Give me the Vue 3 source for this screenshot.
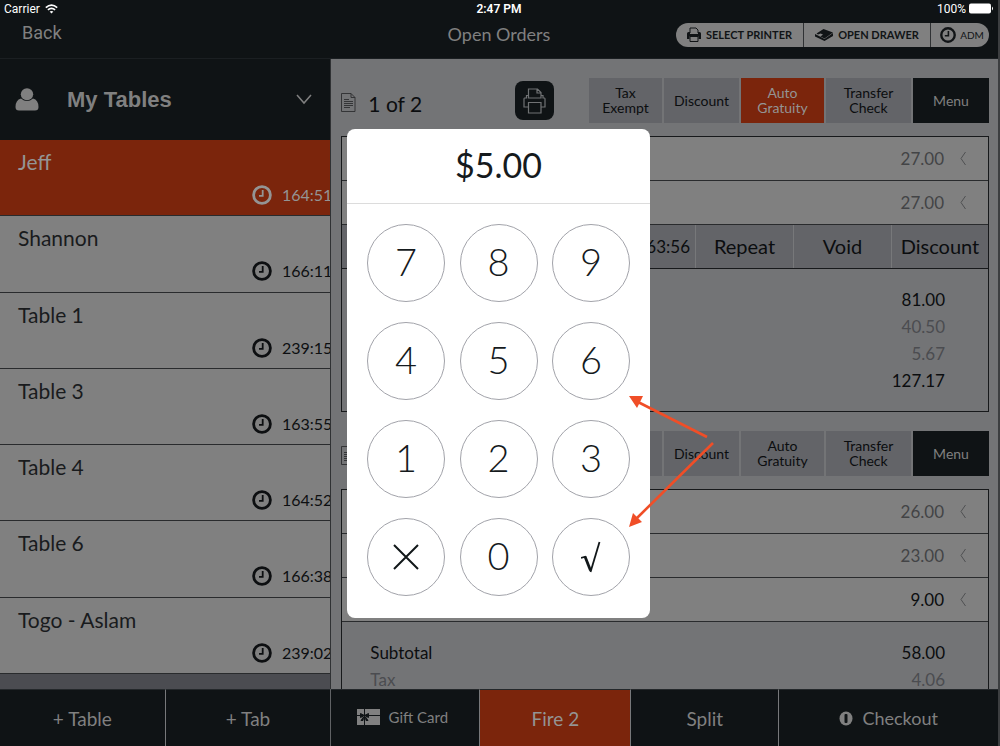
<script setup>
const tables = [
  { name: 'Jeff', time: '164:51', active: true },
  { name: 'Shannon', time: '166:11' },
  { name: 'Table 1', time: '239:15' },
  { name: 'Table 3', time: '163:55' },
  { name: 'Table 4', time: '164:52' },
  { name: 'Table 6', time: '166:38' },
  { name: 'Togo - Aslam', time: '239:02' },
]
const orders = [
  {
    label: '1 of 2',
    auto: true,
    items: [{ price: '27.00', sent: true }, { price: '27.00', sent: true }],
    open: '163:56',
    totals: [
      { value: '81.00' },
      { value: '40.50', dim: true },
      { value: '5.67', dim: true },
      { value: '127.17' },
    ],
  },
  {
    auto: false,
    items: [{ price: '26.00', sent: true }, { price: '23.00', sent: true }, { price: '9.00' }],
    totals: [
      { label: 'Subtotal', value: '58.00' },
      { label: 'Tax', value: '4.06', dim: true },
    ],
  },
]
const keys = ['7', '8', '9', '4', '5', '6', '1', '2', '3', 'x', '0', 'ok']
</script>

<template>
  <div class="app">
    <header class="top">
      <div class="status">
        <span class="carrier">Carrier
          <svg width="13" height="10" viewBox="0 0 13 10" fill="none" stroke="#fff" stroke-width="1.7"><path d="M.8 3.6Q6.5-1.4 12.2 3.6M2.9 5.9Q6.5 2.8 10.1 5.9" /><path d="M6.5 9.5 4.6 7.6Q6.5 6.2 8.4 7.6Z" fill="#fff" stroke="none" /></svg>
        </span>
        <b>2:47 PM</b>
        <span class="battery">100%
          <svg width="25" height="11" viewBox="0 0 25 11" fill="#fff"><rect x="0" y="0.5" width="22" height="10" rx="2" /><path d="M23 3.5q2 2 0 4z" /></svg>
        </span>
      </div>
      <div class="nav">
        <a class="back" href="#">Back</a>
        <h1>Open Orders</h1>
        <div class="pills">
          <button class="printer">
            <svg width="14" height="15" viewBox="0 0 14 15"><path d="M3 6V1h6l2 2v3" fill="none" stroke="#111416" stroke-width="1" /><path d="M1.500 5H3v2h8V5h1.500Q14 5 14 6.500V12h-2.500V9.500H2.500V12H0V6.500Q0 5 1.500 5Z" fill="#111416" /><path d="M3 9.500h8v5H3z" fill="none" stroke="#111416" /></svg>
            SELECT PRINTER
          </button>
          <button class="drawer">
            <svg width="18" height="12" viewBox="0 0 18 12" fill="#111416"><path d="M8.500 0 18 3.500 9.500 9.500 5.500 7.500 8 5.500 5.500 4.500 3 5.500 1.500 4.500Z" /><path d="M0 5 5 7.500 9.500 10 18 4V7L9.500 12 0 7.500Z" /></svg>
            OPEN DRAWER
          </button>
          <button class="adm">
            <svg width="16" height="16" viewBox="0 0 20 20" fill="none" stroke="#111416"><circle cx="10" cy="10" r="8.400" stroke-width="3" /><path d="M10.500 5v6H6" stroke-width="2" /></svg>
            ADM
          </button>
        </div>
      </div>
    </header>

    <main>
      <aside>
        <button class="mine">
          <svg width="24" height="23" viewBox="0 0 24 23" fill="#808080"><ellipse cx="12" cy="6.200" rx="6.200" ry="6" /><path d="M6 10.500q6 5 12 0 5.500 1.500 5.500 8.500 0 3.500-3.500 3.500H4Q.5 22.500.5 19 .5 12 6 10.500Z" /></svg>
          <span>My Tables</span>
          <svg width="16" height="11" viewBox="0 0 16 11" fill="none" stroke="#808080" stroke-width="1.500"><path d="m1 1 7 8 7-8" /></svg>
        </button>
        <ul>
          <li v-for="t in tables" :key="t.name" :class="{ active: t.active }">
            <span class="name">{{ t.name }}</span>
            <span class="time">
              <svg width="20" height="20" viewBox="0 0 20 20" fill="none" stroke="currentColor"><circle cx="10" cy="10" r="8.400" stroke-width="2.800" /><path d="M10.700 5v5.800H7" stroke-width="1.800" /></svg>
              <span>{{ t.time }}</span>
            </span>
          </li>
        </ul>
      </aside>

      <section class="orders">
        <article v-for="(o, i) in orders" :key="i">
          <div class="head">
            <svg class="doc" width="15" height="19" viewBox="0 0 15 19" fill="none" stroke="#2c2e30"><path d="M.5.500h9.500l4 4V18.500H.5ZM10 .500v4h4M3 6.500h5M3 8.500h9M3 10.500h9M3 12.500h9M3 14.500h6" stroke-width=".9" /></svg>
            <h2>{{ o.label }}</h2>
            <button class="print" aria-label="Print">
              <svg width="23" height="26" viewBox="0 0 23 26" fill="none" stroke="#707274" stroke-width="1.200"><path d="M5.500 10V1h9l3.500 3.500V10H5.500ZM14 1v4h4M5.500 7.500H3.500v2.500H1.500Q1 10 1 11v8h4.500M18 7.500h2v2.500h1.500Q22 10 22 11v8h-4M5.500 14.500H18V25H5.500Z" /></svg>
            </button>
            <div class="tools">
              <button>Tax<br>Exempt</button>
              <button>Discount</button>
              <button :class="{ on: o.auto }">Auto<br>Gratuity</button>
              <button>Transfer<br>Check</button>
              <button class="dark">Menu</button>
            </div>
          </div>
          <div class="card">
            <div v-for="(it, n) in o.items" :key="n" class="item" :class="{ sent: it.sent }">
              <span>{{ it.price }}</span>
              <svg width="8" height="15" viewBox="0 0 8 15" fill="none" stroke="#4f5052"><path d="M6.500 1 2 7.500 6.500 14" /></svg>
            </div>
            <div v-if="o.open" class="actions">
              <span>{{ o.open }}</span>
              <button>Repeat</button>
              <button>Void</button>
              <button>Discount</button>
            </div>
            <dl>
              <div v-for="t in o.totals" :key="t.value" :class="{ dim: t.dim }"><dt v-if="t.label">{{ t.label }}</dt><dd>{{ t.value }}</dd></div>
            </dl>
          </div>
        </article>
      </section>
    </main>

    <footer>
      <div class="left">
        <button>+ Table</button>
        <button>+ Tab</button>
      </div>
      <div class="right">
        <button class="gift">
          <svg width="23" height="16" viewBox="0 0 23 16"><path d="M0 0h23v16H0z" fill="#808080" /><path d="M0 6.500h23M7.500 0v16" stroke="#101416" /><path d="M7.500 6.500 3.500 4.500v4zM7.500 6.500 11.500 4.500v4zM6.500 8 4 11.500h2zM8.500 8 11 11.500H9z" fill="#101416" stroke="#101416" /></svg>
          Gift Card
        </button>
        <button class="fire">Fire 2</button>
        <button>Split</button>
        <button class="checkout">
          <svg width="14" height="15" viewBox="0 0 14 15"><ellipse cx="7" cy="7.500" rx="6.500" ry="7" fill="#808080" /><rect x="5.500" y="3" width="3" height="9" rx="1" fill="#101416" /></svg>
          Checkout
        </button>
      </div>
    </footer>

    <div class="overlay">
      <div class="pad" role="dialog" aria-label="Amount">
        <output>$5.00</output>
        <div class="keys">
          <button v-for="k in keys" :key="k" :aria-label="k">
            <svg v-if="k === 'x'" width="26" height="26" viewBox="0 0 26 26" fill="none" stroke="#111719" stroke-width="2"><path d="m1 1 24 24M25 1 1 25" /></svg>
            <svg v-else-if="k === 'ok'" width="20" height="32" viewBox="0 0 20 32" fill="none" stroke="#111719"><path d="m0 17 5-1.500" stroke-width="1.800" /><path d="m4 15.500 5.500 14" stroke-width="2.800" /><path d="M9.500 31 18.500 1" stroke-width="1.800" /></svg>
            <span v-else>{{ k }}</span>
          </button>
        </div>
      </div>
    </div>
    <svg class="arrows" width="90" height="135" viewBox="0 0 90 135" fill="#f04e27" stroke="#f04e27"><path d="M79 41 10 6M85 47 9 122" fill="none" stroke-width="2.600" /><path d="M1 0h14L9 12ZM1 131 5 117 14 126Z" stroke="none" /></svg>
  </div>
</template>

<style>
body { margin: 0; }
</style>

<style scoped>
* { box-sizing: border-box; }
.app { position: relative; display: flex; flex-direction: column; height: 100vh; overflow: hidden; background: #0f1315; border-right: 2px solid #3c3e40; font-family: Lato, "Liberation Sans", sans-serif; color: #0b0d0f; }
button { font: inherit; color: inherit; border: 0; padding: 0; background: none; }
h1, h2, ul, dl, dd { margin: 0; padding: 0; font-weight: 400; }
.top { height: 59px; border-bottom: 1px solid #1b1f22; flex: none; }
.status { display: grid; grid-template-columns: 1fr auto 1fr; height: 17px; padding: 0 4px; align-items: center; color: #fff; font: 12px Roboto, sans-serif; }
.status b { font-weight: 600; }
.carrier, .battery { display: flex; gap: 5px; align-items: center; }
.battery { justify-content: flex-end; gap: 3px; }
.nav { display: grid; grid-template-columns: 1fr auto 1fr; align-items: center; color: #808080; height: 35px; padding: 0 9px; }
.back { padding: 0 0 4px 13px; color: inherit; text-decoration: none; font: 18px/20px Roboto, sans-serif; }
.nav h1 { font-size: 18px; line-height: 22px; padding-bottom: 2px; }
.pills { justify-self: end; display: flex; height: 24px; border-radius: 12px; background: #808080; overflow: hidden; color: #111416; font-size: 11px; font-weight: 700; }
.pills button { display: flex; align-items: center; justify-content: center; gap: 5px; white-space: nowrap; }
.pills button + button { border-left: 1px solid #303234; }
.printer { width: 127px; }
.drawer { width: 127px; }
.pills .adm { width: 59px; gap: 4px; padding-left: 4px; font-weight: 400; font-size: 10px; }
main { display: flex; flex: 1; min-height: 0; }
aside { width: 33.2%; flex: none; display: flex; flex-direction: column; background: #4b4c51; border-right: 1px solid #303234; padding-bottom: 15px; }
.mine { display: flex; align-items: center; height: 81px; background: #0f1315; color: #808080; padding: 0 18px 0 15px; flex: none; font: bold 22px "Liberation Sans", sans-serif; }
.mine span { flex: 1; text-align: left; padding-left: 28px; }
ul { list-style: none; flex: 1; display: flex; flex-direction: column; }
li { flex: 1; background: #808080; border-bottom: 1px solid #292b2d; padding: 9px 0 0 18px; overflow: hidden; font-size: 21px; line-height: 26px; color: #191b1d; }
li.active { background: #7b250c; color: #949494; }
.name { display: block; }
.time { display: flex; align-items: center; gap: 10px; height: 26px; margin: 7px 0 0 234px; width: 100px; font-size: 16px; }
li .time { color: #0d0f11; }
li.active .time { color: #949494; }
.orders { flex: 1; min-width: 0; overflow: hidden; background: #737476; padding: 19px 9px 0 10px; display: flex; flex-direction: column; gap: 19px; }
article { flex: none; }
.head { display: flex; align-items: center; height: 45px; margin-bottom: 13px; }
.doc { margin-top: 3px; }
h2 { font-size: 21px; padding: 6px 0 0 12px; width: 159px; }
.print { width: 39px; height: 39px; border-radius: 8px; background: #0f1315; display: grid; place-items: center; }
.tools { margin-left: auto; display: grid; grid-template-columns: 73px 75px 83px 85px 76px; gap: 2px; height: 45px; font-size: 14px; line-height: 15px; }
.tools button { background: #636468; padding-bottom: 1px; }
.tools .on { background: #7b250c; color: #949494; }
.tools .dark { background: #0f1315; color: #808080; }
.card { border: 1px solid #17191b; }
.item { height: 44px; background: #808080; border-bottom: 1px solid #292b2d; display: flex; align-items: center; justify-content: flex-end; gap: 15px; padding-right: 21px; font-size: 17px; }
.sent { color: #434446; }
.actions { height: 44px; display: flex; justify-content: flex-end; background: #636468; border-bottom: 1px solid #17191b; font-size: 20px; line-height: 43px; }
.actions span { padding-right: 5px; font-size: 17px; }
.actions button { width: 98px; border-left: 1px solid #77787a; }
.actions button:last-child { width: 97px; }
dl { padding: 17px 43px 17px 28px; font-size: 17px; line-height: 27px; }
dl div { display: flex; justify-content: space-between; }
dd { margin-left: auto; }
.dim { color: #4b4c50; }
footer { height: 57px; flex: none; display: flex; color: #808080; font-size: 19px; }
.left { width: 33.2%; display: flex; flex: none; border-right: 1px solid #606264; }
.right { flex: 1; display: grid; grid-template-columns: 148px 151px 148px 1fr; }
.left button { flex: 1; }
footer button { border-top: 1px solid #24282b; }
footer button + button { border-left: 1px solid #77787a; }
.gift, .checkout { display: flex; align-items: center; justify-content: center; gap: 9px; }
.gift { font-size: 15px; padding: 0 6px 3px 0; }
.checkout { font-size: 18px; }
.fire { background: #7b250c; color: #949494; }
.overlay { position: absolute; inset: 0 1px 0 0; display: grid; place-items: center; }
.pad { width: 303px; background: #fff; border-radius: 8px; color: #151a1d; padding-bottom: 22px; }
output { display: block; height: 75px; line-height: 71px; text-align: center; font-size: 34px; border-bottom: 1px solid #dcdcdc; }
.keys { display: grid; grid-template-columns: repeat(3, 78px); justify-content: space-between; row-gap: 20px; padding: 20px 20px 0; }
.keys button { height: 78px; border: 1px solid #a2a3aa; border-radius: 50%; display: grid; place-items: center; font-size: 38px; font-weight: 300; }
.keys span { padding-bottom: 4px; }
.arrows { position: absolute; left: 628px; top: 396px; }
</style>
